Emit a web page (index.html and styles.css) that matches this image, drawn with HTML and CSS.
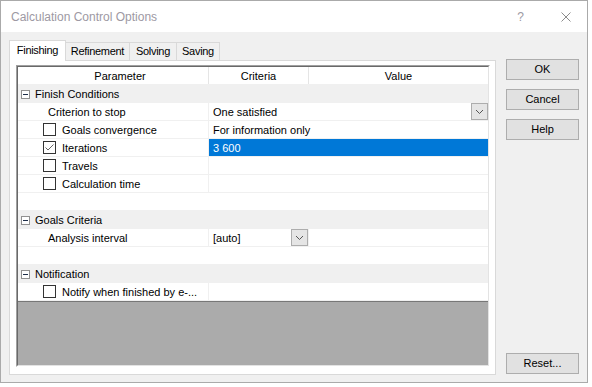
FILE: index.html
```html
<!DOCTYPE html>
<html>

<head lang="en">
    <meta charset="UTF-8">
    <title>Calculation Control Options</title>
    <link rel="stylesheet" href="styles.css">
</head>

<body>
<div class="window">
    <!-- title bar -->
    <div class="titlebar">
        <span class="title">Calculation Control Options</span>
        <span class="help">?</span>
        <svg class="close" width="10" height="10" viewBox="0 0 10 10">
            <path d="M0.5 0.5 L9.5 9.5 M9.5 0.5 L0.5 9.5" stroke="#8c8c8c" stroke-width="1" fill="none"/>
        </svg>
    </div>

    <div class="content">
        <div class="main">
            <!-- tabs -->
            <div class="tabs">
                <div class="tab active">Finishing</div>
                <div class="tab t-refine">Refinement</div>
                <div class="tab t-solve">Solving</div>
                <div class="tab t-save">Saving</div>
            </div>

            <div class="panel">
                <div class="grid">
                    <div class="grid-inner">
                        <div class="row head">
                            <div class="cell c0">Parameter</div>
                            <div class="cell c1">Criteria</div>
                            <div class="cell c2">Value</div>
                        </div>

                        <div class="row group"><span class="toggle"></span>Finish Conditions</div>
                        <div class="row">
                            <div class="cell c0 ind">Criterion to stop</div>
                            <div class="cell wide">
                                <span>One satisfied</span>
                                <span class="drop">
                                    <svg width="7" height="4" viewBox="0 0 7 4"><polyline points="0,0 3.5,3.5 7,0" stroke="#555" fill="none"/></svg>
                                </span>
                            </div>
                        </div>
                        <div class="row">
                            <div class="cell c0"><span class="check"></span>Goals convergence</div>
                            <div class="cell wide">For information only</div>
                        </div>
                        <div class="row">
                            <div class="cell c0">
                                <span class="check">
                                    <svg width="11" height="11" viewBox="0 0 11 11"><polyline points="1.5,5.5 4,8 9.5,2.5" stroke="#666" fill="none"/></svg>
                                </span>Iterations
                            </div>
                            <div class="cell wide sel">3 600</div>
                        </div>
                        <div class="row">
                            <div class="cell c0"><span class="check"></span>Travels</div>
                            <div class="cell wide"></div>
                        </div>
                        <div class="row">
                            <div class="cell c0"><span class="check"></span>Calculation time</div>
                            <div class="cell wide"></div>
                        </div>
                        <div class="row blank"></div>

                        <div class="row group"><span class="toggle"></span>Goals Criteria</div>
                        <div class="row">
                            <div class="cell c0 ind">Analysis interval</div>
                            <div class="cell c1 val">
                                <span>[auto]</span>
                                <span class="drop">
                                    <svg width="7" height="4" viewBox="0 0 7 4"><polyline points="0,0 3.5,3.5 7,0" stroke="#555" fill="none"/></svg>
                                </span>
                            </div>
                            <div class="cell c2"></div>
                        </div>
                        <div class="row blank"></div>

                        <div class="row group"><span class="toggle"></span>Notification</div>
                        <div class="row">
                            <div class="cell c0"><span class="check"></span>Notify when finished by e-...</div>
                            <div class="cell c2"></div>
                        </div>

                        <div class="empty"></div>
                    </div>
                </div>
            </div>
        </div>

        <!-- dialog buttons -->
        <div class="buttons">
            <div class="btn">OK</div>
            <div class="btn">Cancel</div>
            <div class="btn">Help</div>
            <div class="btn reset">Reset...</div>
        </div>
    </div>
</div>
</body>

</html>
```

FILE: styles.css
```css
* {
    padding: 0;
    margin: 0;
    box-sizing: border-box;
}

body {
    background: #fff;
    font-family: "Liberation Sans", Arial, sans-serif;
    font-size: 11px;
    color: #000;
}

.window {
    width: 588px;
    height: 383px;
    border: 1px solid #aaa;
    background: #f0f0f0;
    display: flex;
    flex-direction: column;
}

.titlebar {
    height: 31px;
    background: #fff;
    display: flex;
    align-items: center;
    padding-left: 10px;
    color: #9d99a3;
    font-size: 12px;
}

.title {
    flex: 1;
}

.help {
    margin-right: 37px;
}

.close {
    margin-right: 16px;
}

.content {
    flex: 1;
    display: flex;
    padding: 8px 8px 7px 8px;
}

.main {
    width: 487px;
    display: flex;
    flex-direction: column;
}

/* tabs */
.tabs {
    height: 20px;
    display: flex;
    align-items: flex-end;
    position: relative;
    z-index: 1;
}

.tab {
    height: 18px;
    margin-left: -1px;
    border: 1px solid #d9d9d9;
    border-bottom: none;
    background: #f0f0f0;
    text-align: center;
    line-height: 17px;
    letter-spacing: -0.3px;
}

.tab.active {
    width: 57px;
    height: 21px;
    margin-left: 0;
    margin-bottom: -1px;
    background: #fff;
    line-height: 18px;
    position: relative;
    z-index: 2;
}

.t-refine {
    width: 65px;
}

.t-solve {
    width: 48px;
}

.t-save {
    width: 44px;
}

.panel {
    height: 315px;
    border: 1px solid #d9d9d9;
    background: #fff;
    padding: 4px 5px 7px 6px;
}

/* property grid */
.grid {
    width: 474px;
    height: 302px;
    border: 1px solid;
    border-color: #a0a0a0 #fff #fff #a0a0a0;
}

.grid-inner {
    height: 100%;
    border: 1px solid;
    border-color: #696969 #e3e3e3 #e3e3e3 #696969;
    display: flex;
    flex-direction: column;
}

.row {
    height: 18px;
    flex-shrink: 0;
    display: flex;
    border-bottom: 1px solid #f0f0f0;
    line-height: 17px;
    background: #fff;
}

.cell {
    white-space: nowrap;
    overflow: hidden;
    display: flex;
    align-items: flex-start;
    padding-top: 1px;
}

.c0 {
    width: 191px;
    border-right: 1px solid #f0f0f0;
}

.c1 {
    width: 100px;
    border-right: 1px solid #f0f0f0;
}

.c2 {
    flex: 1;
}

.head .cell {
    justify-content: center;
    border-color: #e5e5e5;
}

.head .c0 {
    padding-left: 14px;
}

.ind {
    padding-left: 30px;
}

.wide {
    flex: 1;
    padding-left: 4px;
    justify-content: space-between;
}

.val {
    padding-left: 4px;
    justify-content: space-between;
}

.sel {
    background: #0078d7;
    color: #fff;
}

.group {
    background: #f0f0f0;
    align-items: flex-start;
    padding: 1px 0 0 3px;
}

.toggle {
    position: relative;
    width: 9px;
    height: 9px;
    margin: 4px 5px 0 0;
    border: 1px solid #919191;
    background: #fff;
}

.toggle::after {
    content: "";
    position: absolute;
    left: 1px;
    top: 3px;
    width: 5px;
    height: 1px;
    background: #1e2e4a;
}

.check {
    width: 13px;
    height: 13px;
    margin: 1px 6px 0 25px;
    border: 1px solid #333;
    background: #fff;
    display: flex;
}

.drop {
    width: 17px;
    height: 17px;
    margin-top: -1px;
    border: 1px solid #adadad;
    background: #e5e5e5;
    display: flex;
    align-items: center;
    justify-content: center;
}

.empty {
    flex: 1;
    background: #ababab;
    border-top: 1px solid #777;
}

/* buttons */
.buttons {
    width: 73px;
    margin-left: 10px;
    padding-top: 19px;
    padding-bottom: 1px;
    display: flex;
    flex-direction: column;
    gap: 9px;
}

.btn {
    height: 21px;
    border: 1px solid #adadad;
    background: #e1e1e1;
    text-align: center;
    line-height: 19px;
}

.reset {
    margin-top: auto;
}
```
